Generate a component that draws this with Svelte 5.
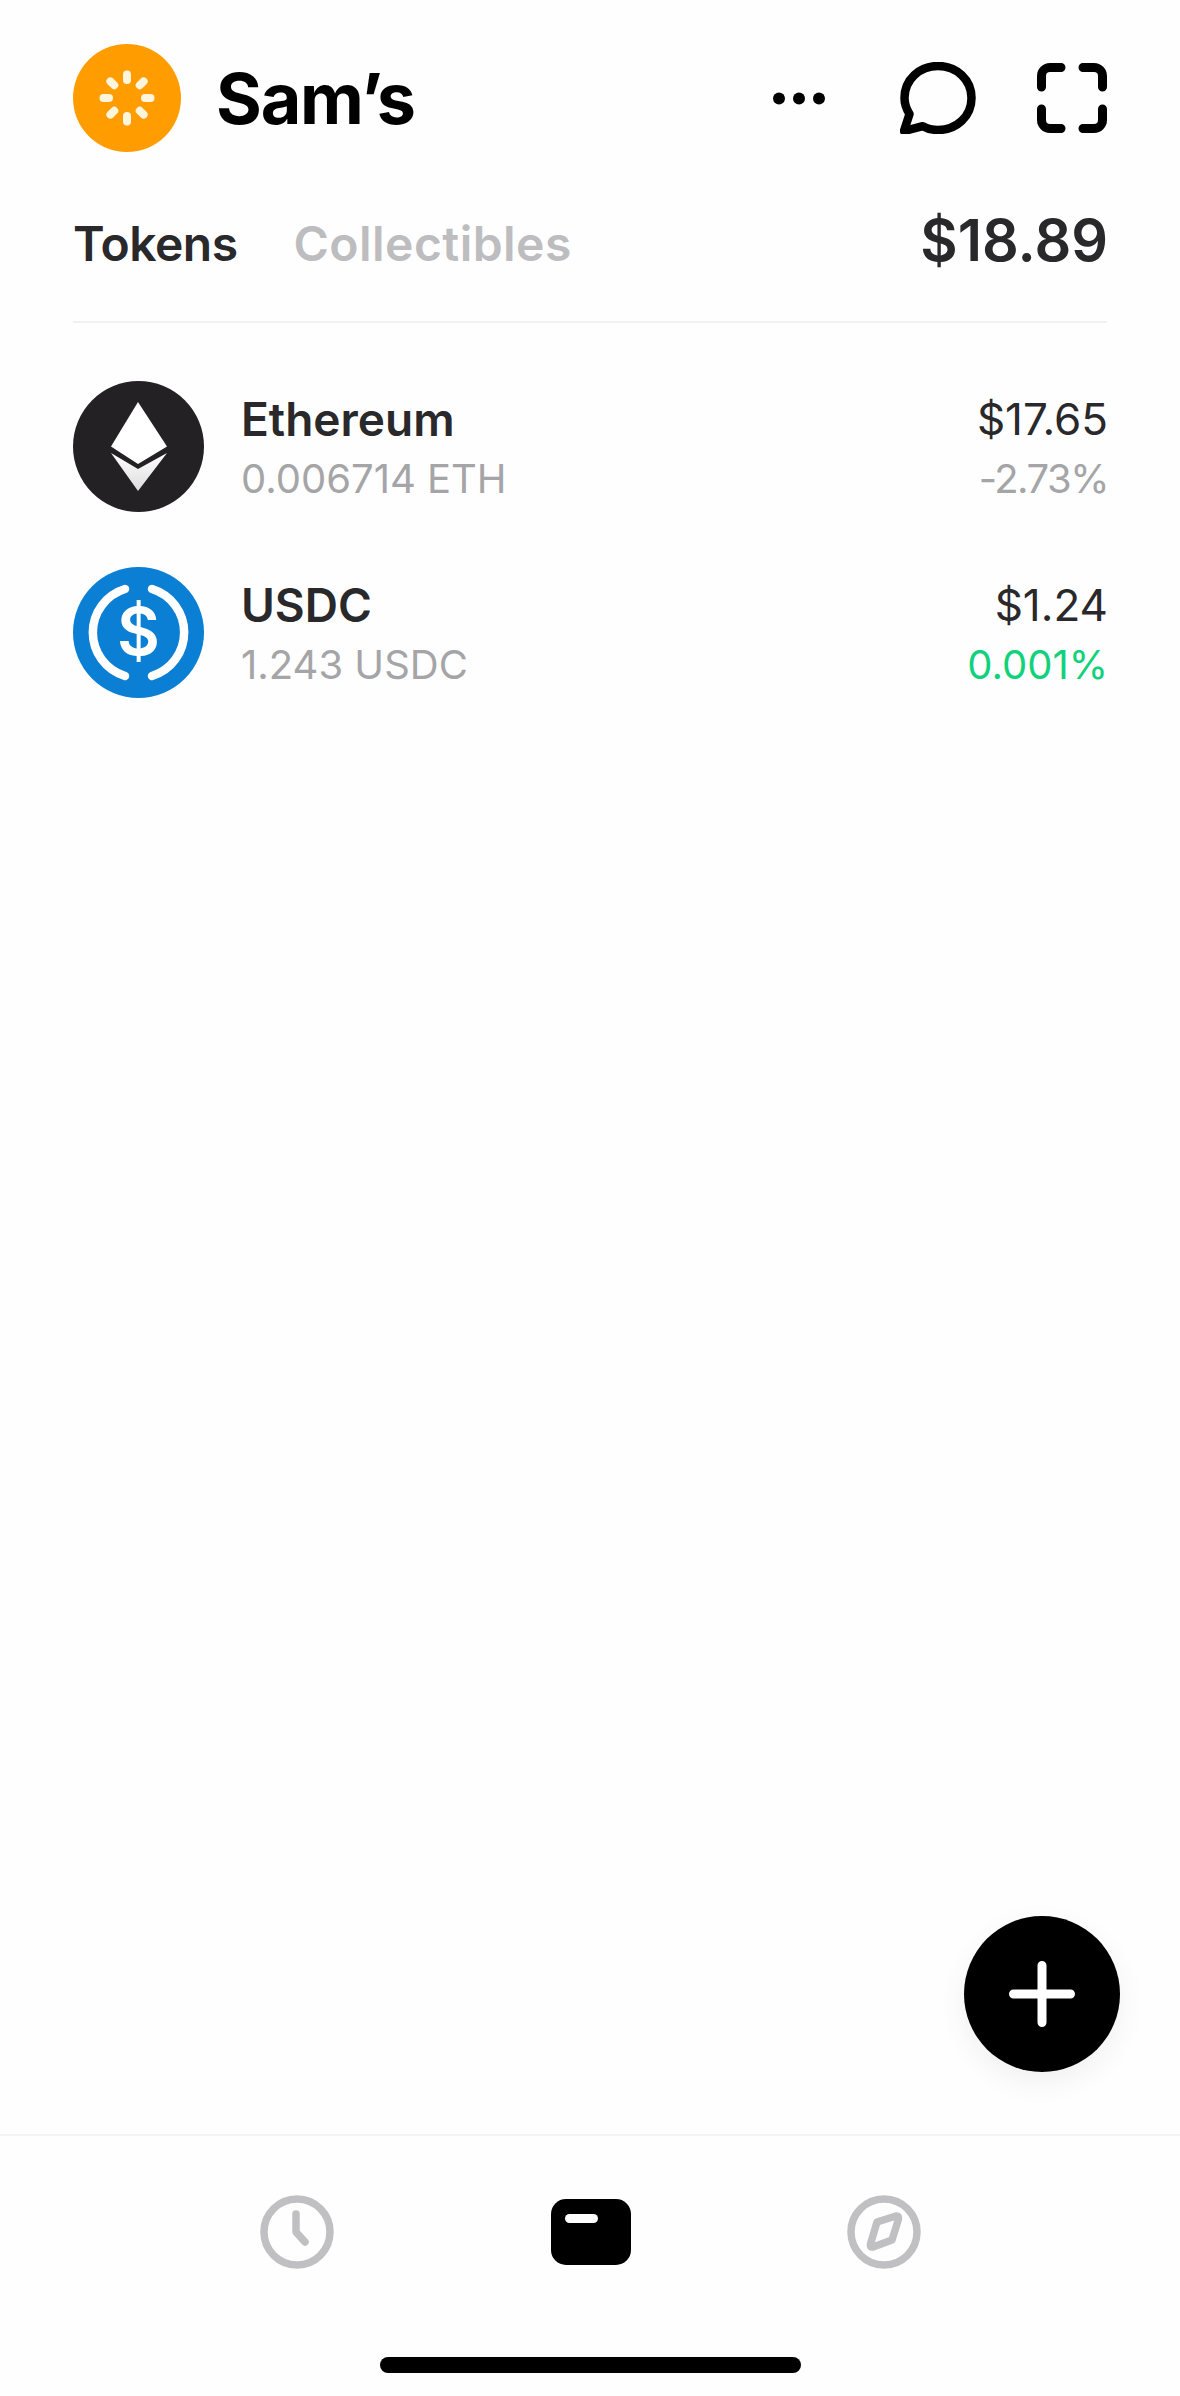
<script>
  const petals = [0, 45, 90, 135, 180, 225, 270, 315];
  const tokens = [
    { name: 'Ethereum', amount: '0.006714 ETH', value: '$17.65', change: '-2.73%', up: false, kind: 'eth' },
    { name: 'USDC', amount: '1.243 USDC', value: '$1.24', change: '0.001%', up: true, kind: 'usdc' }
  ];
</script>

<div class="app">
  <header class="top">
    <svg class="avatar" viewBox="0 0 108 108" aria-hidden="true">
      <circle cx="54" cy="54" r="54" fill="#ff9d00" />
      {#each petals as a}
        <rect x="50" y="26.5" width="8" height="13.5" rx="4" fill="#fff4dc" transform="rotate({a} 54 54)" />
      {/each}
    </svg>
    <h1 class="name">Sam’s</h1>
    <div class="actions">
      <svg class="dots" viewBox="0 0 52 13" aria-hidden="true">
        <circle cx="6" cy="6.5" r="6" /><circle cx="26" cy="6.5" r="6" /><circle cx="46" cy="6.5" r="6" />
      </svg>
      <svg class="chat" viewBox="0 0 76 72" aria-hidden="true">
        <path d="M4 69 L9.5 52 C6 46.5 4.5 41.5 4.5 36 C4.5 17.5 19.5 4 38 4 C56.5 4 71.5 17.5 71.5 36 C71.5 54.5 56.5 68 38 68 C32.5 68 27.5 66.8 22.8 64.2 Z" />
      </svg>
      <svg class="scan" viewBox="0 0 70 70" aria-hidden="true">
        <path d="M4.5 24 V13 A8.5 8.5 0 0 1 13 4.500 H24 M46 4.500 H57 A8.500 8.500 0 0 1 65.500 13 V24 M65.500 46 V57 A8.500 8.500 0 0 1 57 65.500 H46 M24 65.500 H13 A8.500 8.500 0 0 1 4.500 57 V46" />
      </svg>
    </div>
  </header>

  <nav class="tabs">
    <span class="tab active">Tokens</span>
    <span class="tab">Collectibles</span>
    <span class="total">$18.89</span>
  </nav>

  <main class="list">
    {#each tokens as t}
      <div class="row">
        {#if t.kind === 'eth'}
          <svg class="coin" viewBox="0 0 131 131" aria-hidden="true">
            <defs>
              <linearGradient id="ethLow" x1="0" y1="0" x2="0" y2="1">
                <stop offset="0" stop-color="#ffffff" />
                <stop offset="1" stop-color="#dcdcde" />
              </linearGradient>
            </defs>
            <circle cx="65.500" cy="65.500" r="65.500" fill="#232124" />
            <path d="M65 21 L94 65.500 L65 83 L38 65.500 Z" fill="#fff" />
            <path d="M38 72 L65 88 L94 72 L65 110 Z" fill="url(#ethLow)" />
          </svg>
        {:else}
          <svg class="coin" viewBox="0 0 131 131" aria-hidden="true">
            <circle cx="65.500" cy="65.500" r="65.500" fill="#0b7fd4" />
            <path d="M52 22 A45.500 45.500 0 0 0 52 109 M79 22 A45.500 45.500 0 0 1 79 109" fill="none" stroke="#fff" stroke-width="8.500" stroke-linecap="round" />
            <text x="65.500" y="88" text-anchor="middle" class="dollar">$</text>
          </svg>
        {/if}
        <div class="info">
          <div class="title">{t.name}</div>
          <div class="sub">{t.amount}</div>
        </div>
        <div class="nums">
          <div class="value">{t.value}</div>
          <div class="change" class:up={t.up} class:down={!t.up}>{t.change}</div>
        </div>
      </div>
    {/each}
  </main>

  <button class="fab" aria-label="Add">
    <svg viewBox="0 0 66 66" aria-hidden="true">
      <path d="M33 4.500 V61.500 M4.500 33 H61.500" />
    </svg>
  </button>

  <footer class="bar">
    <svg class="navicon" viewBox="0 0 74 74" aria-hidden="true">
      <circle class="gray" cx="37" cy="37" r="33" />
      <path class="gray" d="M36 19 V37 L45 47" />
    </svg>
    <svg class="wallet" viewBox="0 0 80 66" aria-hidden="true">
      <rect width="80" height="66" rx="15" fill="#000" />
      <rect x="14" y="15" width="33" height="9" rx="4.500" fill="#fff" />
    </svg>
    <svg class="navicon" viewBox="0 0 74 74" aria-hidden="true">
      <circle class="gray" cx="37" cy="37" r="33" />
      <path class="gray" d="M30 27 L49 21 Q52 20.500 51.500 24 L45 45 L26 52 Q22.500 52.500 23.500 49 Z" />
    </svg>
  </footer>
  <div class="homebar"></div>
</div>

<style>
  :global(body) {
    margin: 0;
    background: #fefefe;
  }
  .app {
    position: relative;
    width: 1180px;
    height: 2396px;
    display: flex;
    flex-direction: column;
    box-sizing: border-box;
    background: #fefefe;
    font-family: Inter, "Liberation Sans", sans-serif;
    overflow: hidden;
  }
  .top {
    display: flex;
    align-items: center;
    padding: 44px 73px 0;
  }
  .avatar {
    width: 108px;
    height: 108px;
    flex: none;
  }
  .name {
    margin: 2px 0 0 35px;
    font-size: 70px;
    line-height: 84px;
    font-weight: 700;
    letter-spacing: -1.200px;
    color: #000;
  }
  .actions {
    margin-left: auto;
    display: flex;
    align-items: center;
  }
  .dots {
    width: 52px;
    height: 13px;
    fill: #000;
  }
  .chat {
    width: 76px;
    height: 72px;
    margin-left: 75px;
    fill: none;
    stroke: #000;
    stroke-width: 8.500;
    stroke-linejoin: round;
  }
  .scan {
    width: 70px;
    height: 70px;
    margin-left: 61px;
    fill: none;
    stroke: #000;
    stroke-width: 9;
    stroke-linecap: round;
  }
  .tabs {
    display: flex;
    align-items: center;
    height: 80px;
    margin: 52px 73px 0;
    padding-bottom: 37px;
    border-bottom: 2px solid #f1f1f2;
  }
  .tab {
    font-size: 48px;
    line-height: 60px;
    font-weight: 600;
    color: #bdbdc0;
    margin-right: 56px;
    letter-spacing: 0.450px;
  }
  .tab.active {
    color: #29282b;
    letter-spacing: -0.500px;
  }
  .total {
    margin-left: auto;
    margin-right: -1px;
    font-size: 57.500px;
    font-weight: 600;
    line-height: 60px;
    color: #29282b;
    margin-top: -9px;
  }
  .list {
    flex: 1;
    padding: 58px 72px 0 73px;
    display: flex;
    flex-direction: column;
    gap: 55px;
  }
  .row {
    display: flex;
    align-items: center;
    height: 131px;
  }
  .coin {
    width: 131px;
    height: 131px;
    flex: none;
  }
  .dollar {
    font-family: Inter, sans-serif;
    font-size: 66px;
    font-weight: 600;
    fill: #fff;
  }
  .info {
    margin-left: 37px;
    padding-top: 4px;
  }
  .title {
    font-size: 46px;
    line-height: 60px;
    font-weight: 600;
    color: #29282b;
  }
  .sub {
    font-size: 40px;
    line-height: 60px;
    color: #a5a5a7;
  }
  .nums {
    margin-left: auto;
    padding-top: 4px;
    text-align: right;
  }
  .value {
    font-size: 44px;
    line-height: 60px;
    color: #29282b;
  }
  .change {
    font-size: 40px;
    line-height: 60px;
    color: #a5a5a7;
  }
  .change.down {
    letter-spacing: -1.500px;
  }
  .change.up {
    color: #10d27c;
  }
  .fab {
    position: absolute;
    left: 964px;
    top: 1916px;
    width: 156px;
    height: 156px;
    padding: 0;
    border: 0;
    border-radius: 50%;
    background: #000;
    box-shadow: 0 10px 30px rgba(0, 0, 0, 0.06);
    display: flex;
    align-items: center;
    justify-content: center;
  }
  .fab svg {
    width: 66px;
    height: 66px;
    fill: none;
    stroke: #fff;
    stroke-width: 9;
    stroke-linecap: round;
  }
  .bar {
    position: relative;
    height: 262px;
    box-sizing: border-box;
    border-top: 2px solid #f3f3f4;
    display: flex;
    align-items: flex-start;
    justify-content: space-between;
    padding: 59px 259px 0 260px;
  }
  .navicon {
    width: 74px;
    height: 74px;
  }
  .gray {
    fill: none;
    stroke: #c0c0c3;
    stroke-width: 7.500;
    stroke-linecap: round;
    stroke-linejoin: round;
  }
  .wallet {
    width: 80px;
    height: 66px;
    margin-top: 4px;
  }
  .homebar {
    position: absolute;
    left: 380px;
    top: 2357px;
    width: 421px;
    height: 16px;
    border-radius: 8px;
    background: #000;
  }
</style>
